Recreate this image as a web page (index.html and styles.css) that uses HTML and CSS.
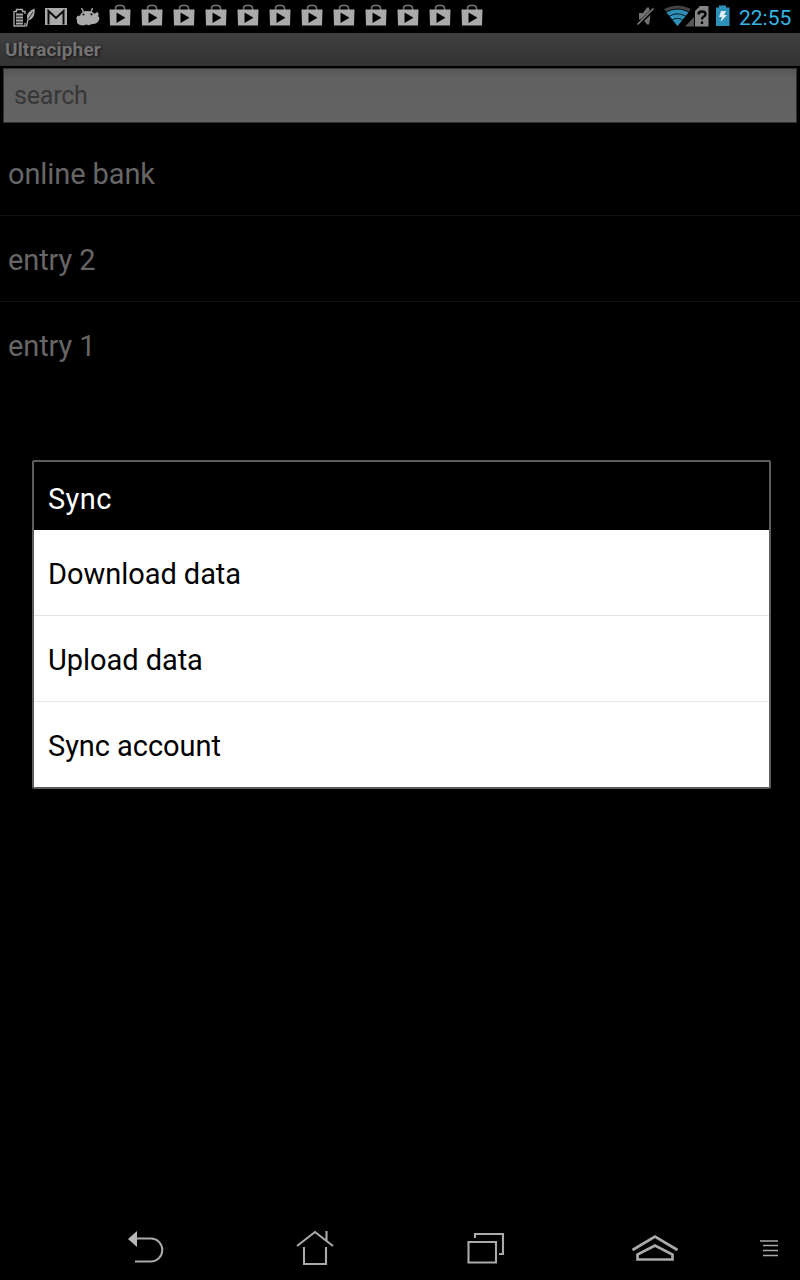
FILE: index.html
```html
<!DOCTYPE html>
<html lang="en">
<head>
<meta charset="utf-8">
<title>Ultracipher</title>
<link rel="stylesheet" href="styles.css">
</head>
<body>
<div class="screen">
  <header class="status">
    <div class="notifications" id="notifications">
      <svg class="note" viewBox="0 0 32 33"><path d="M6 11.500h2.500V9.500h6v2H17V14M6 11v15h11v-3" fill="none" stroke="#aaa" stroke-width="1.300"/><path d="M8 14.500h7M8 17.500h7M8 20.500h7M8 23.500h7" fill="none" stroke="#aaa" stroke-width="1.900"/><path d="M19.500 20.500C17.500 14 21 11 26.500 8.500C27.500 14 25 20 19.500 20.500z" fill="#aaa"/><path d="M18.500 26.500L20 19.500" stroke="#aaa" stroke-width="1.300"/><path d="M20 19.500L25 12" stroke="#222" stroke-width=".9"/></svg>
      <svg class="note" viewBox="0 0 32 33"><path d="M5 8h22v17H5z" fill="#aaa"/><path d="M8.500 24.500V11l7.500 7 7.500-7v13.500" fill="none" stroke="#080808" stroke-width="2"/></svg>
      <svg class="note" viewBox="0 0 32 33"><path d="M9.500 8l2 4M20.500 8l-1.500 4" stroke="#aaa" stroke-width="1.400"/><path d="M8 16Q9 11 15.500 11Q21 11 22.500 14Q24 11.500 26 12.500Q27.500 14 26 16Q28.500 18 26.500 21Q24.500 24.500 20 24Q17 26 14.500 24.500Q11 26 8 25Q4.500 24 5 20.500Q3.500 18 5.500 16Q6.500 15 8 16z" fill="#aaa"/><circle cx="11.500" cy="14.500" r="1.100" fill="#111"/><circle cx="19.500" cy="14.300" r="1.100" fill="#111"/></svg>
    </div>
    <div class="indicators">
      <svg class="signals" viewBox="0 0 100 33">
        <path d="M4 13h4l4-5.500h2q2.500 8.500 0 17h-2L8 19.500H4z" fill="#707070"/><path d="M3 24.500L19 9" stroke="#000" stroke-width="3.500"/><path d="M2.500 24.500L18.500 8.500" stroke="#888" stroke-width="1.500"/>
        <path d="M29 9q13.500-7 27 0L42.500 26z" fill="#444"/><path d="M31.500 12.500q11-6 22 0L42.500 26z" fill="#2c91b9"/>
        <path d="M30.500 12q12-6 24 0M34 16.300q8.500-5 17 0M37 20.300q5.500-4 11 0" fill="none" stroke="#06151b" stroke-width="1"/>
        <path d="M60 11l5-5h8.500v20.500H60z" fill="#858585"/><path d="M59 17v9.500h-9z" fill="#555"/>
        <path d="M63.500 14.500q0-3 3.500-3q3.500 0 3.500 2.700q0 1.500-2 2.600q-1.500 1-1.500 2.700M67 21.500V24" fill="none" stroke="#000" stroke-width="2.300"/>
        <path d="M81 7.500h3v-2h7v2h3.500v18.500H81z" fill="#2c91b9"/><path d="M86 11h5l-2 4h3l-6.500 7 1.500-5h-3z" fill="#e5f0f4"/>
      </svg>
      <span class="clock">22:55</span>
    </div>
  </header>
  <div class="titlebar">Ultracipher</div>
  <div class="search">search</div>
  <ul class="entries"><li>online bank</li><li>entry 2</li><li>entry 1</li></ul>
  <section class="dialog">
    <h1>Sync</h1>
    <ul class="options"><li>Download data</li><li>Upload data</li><li>Sync account</li></ul>
  </section>
  <nav class="navbar">
    <svg class="back" viewBox="0 0 36 34"><path d="M8 7.500h15a11.300 11.500 0 0 1 0 23H7" fill="none" stroke="#aaa" stroke-width="2"/><path d="M0 8L9 0v16z" fill="#b8b8b8"/></svg>
    <svg class="home" viewBox="0 0 38 36"><path d="M1 16L19 2l18 14M30.500 1v10M8 17v17h22V17" fill="none" stroke="#aaa" stroke-width="2.100"/></svg>
    <svg class="recent" viewBox="0 0 38 32"><path d="M1.500 10h27.500v20.500H1.500zM8 6V2h28v20h-4" fill="none" stroke="#aaa" stroke-width="2.100"/></svg>
    <svg class="up" viewBox="0 0 48 28"><path d="M1.500 16L24 2.500 46.500 16M6.500 25.500v-5L24 11.500l17.500 9v5z" fill="none" stroke="#aaa" stroke-width="2.700"/></svg>
    <svg class="menu" viewBox="0 0 18 18"><path d="M0 2h18M3 6.500h15M3 11.500h15M3 16.500h15" stroke="#aaa" stroke-width="1.400"/></svg>
  </nav>
</div>
<script src="status.js"></script>
</body>
</html>
```
FILE: status.js
```js
// Twelve pending store notifications.
const bag = '<svg class="note" viewBox="0 0 32 33"><path d="M11.500 10V8.500q0-3 3-3h3q3 0 3 3V10" fill="none" stroke="#777" stroke-width="1.400"/><path d="M5.500 9.500h21L26 25.500H6z" fill="#aaa"/><path d="M12.500 12.500l9 5.200-9 5.300z" fill="#000"/></svg>';
document.getElementById('notifications').insertAdjacentHTML('beforeend', bag.repeat(12));
```
FILE: styles.css
```css
* { box-sizing: border-box; }
body { margin: 0; background: #000; font-family: Roboto, sans-serif; }
.screen { width: 800px; height: 1280px; overflow: hidden; display: flex; flex-direction: column; background: #000; }
.status { height: 33px; flex: none; display: flex; justify-content: space-between; padding: 0 8px; }
.notifications, .indicators { display: flex; }
.note { width: 32px; height: 33px; }
.signals { width: 100px; height: 33px; margin-right: 4px; }
.clock { width: 53px; font-size: 21px; line-height: 37px; color: #33b5e5; white-space: nowrap; }
.titlebar { height: 33px; flex: none; padding-left: 5px; font-size: 19px; font-weight: 700; letter-spacing: 0.15px; line-height: 33px; color: #737373; background: linear-gradient(#404040, #333); text-shadow: 1px 1px 3px #111; }
.search { height: 55px; flex: none; margin: 2px 3px 0; padding-left: 10px; font-size: 25px; letter-spacing: -0.2px; line-height: 54px; color: #373737; border: 1px solid #333; background: linear-gradient(#565656, #606060 8px, #636363); }
.entries, .options { margin: 0; padding: 0; list-style: none; }
.entries { padding-top: 7px; height: 337px; flex: none; }
.entries li { height: 86px; padding-left: 8px; font-size: 29px; letter-spacing: -0.1px; line-height: 88px; color: #666; border-bottom: 1px solid #111; }
.entries li:last-child, .options li:last-child { border: 0; }
.dialog { width: 739px; height: 329px; flex: none; margin-left: 32px; border: 2px solid #5c5d5d; border-radius: 2px; background: #fff; }
.dialog h1 { margin: 0; height: 68px; padding-left: 14px; font-size: 29px; font-weight: 400; letter-spacing: 0.4px; line-height: 74px; color: #fff; background: #000; }
.options li { height: 86px; padding-left: 14px; font-size: 29px; letter-spacing: -0.05px; line-height: 89px; color: #000; border-bottom: 1px solid #e5e5e5; }
.options li:last-child { height: 85px; }
.navbar { height: 64px; margin-top: auto; display: flex; align-items: center; }
.back { width: 36px; height: 34px; margin-left: 128px; }
.home { width: 38px; height: 36px; margin-left: 132px; }
.recent { width: 38px; height: 32px; margin-left: 133px; }
.up { width: 48px; height: 28px; margin-left: 126px; }
.menu { width: 18px; height: 18px; margin-left: 81px; }
```
